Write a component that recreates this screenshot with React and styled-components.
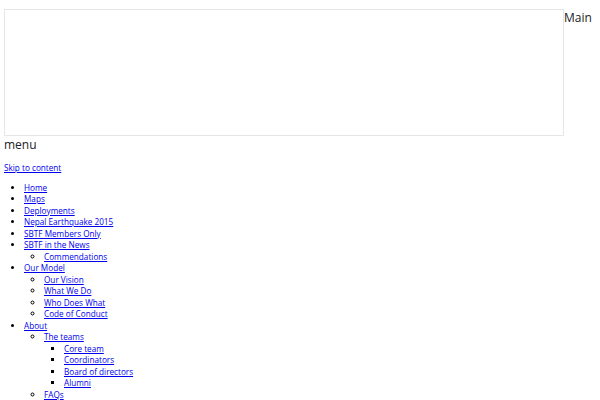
import styled, { createGlobalStyle } from "styled-components";

const GlobalStyle = createGlobalStyle`
  body {
    margin: 4px;
    font-family: "Open Sans", "Noto Sans", sans-serif;
    color: #000;
    background: #fff;
  }
`;

const Header = styled.header`
  padding-top: 5px;
  font-size: 12px;
  line-height: normal;
  color: #222;
`;

const LogoFrame = styled.div`
  display: inline-block;
  vertical-align: top;
  box-sizing: border-box;
  width: 560px;
  height: 127px;
  border: 1px solid #e6e6e6;
  background: #fff;
`;

const Nav = styled.nav`
  font-size: 8.2px;
  line-height: 11.5px;
  margin-top: 9px;
`;

const Link = styled.a`
  color: #0000ee;
  text-decoration: underline;
`;

const Menu = styled.ul`
  margin: ${(props) => (props.nested ? "0" : "8px 0")};
  padding-left: 20px;
  list-style-type: ${(props) =>
    props.level === 2 ? "square" : props.level === 1 ? "circle" : "disc"};
`;

const menu = [
  { label: "Home" },
  { label: "Maps" },
  { label: "Deployments" },
  { label: "Nepal Earthquake 2015" },
  { label: "SBTF Members Only" },
  { label: "SBTF in the News", children: [{ label: "Commendations" }] },
  {
    label: "Our Model",
    children: [
      { label: "Our Vision" },
      { label: "What We Do" },
      { label: "Who Does What" },
      { label: "Code of Conduct" },
    ],
  },
  {
    label: "About",
    children: [
      {
        label: "The teams",
        children: [
          { label: "Core team" },
          { label: "Coordinators" },
          { label: "Board of directors" },
          { label: "Alumni" },
        ],
      },
      { label: "FAQs" },
    ],
  },
];

function MenuList({ items, level = 0 }) {
  return (
    <Menu level={level} nested={level > 0}>
      {items.map((item) => (
        <li key={item.label}>
          <Link href="#">{item.label}</Link>
          {item.children && <MenuList items={item.children} level={level + 1} />}
        </li>
      ))}
    </Menu>
  );
}

export default function App() {
  return (
    <>
      <GlobalStyle />
      <Header>
        <LogoFrame />Main menu
      </Header>
      <Nav>
        <Link href="#">Skip to content</Link>
        <MenuList items={menu} />
      </Nav>
    </>
  );
}
